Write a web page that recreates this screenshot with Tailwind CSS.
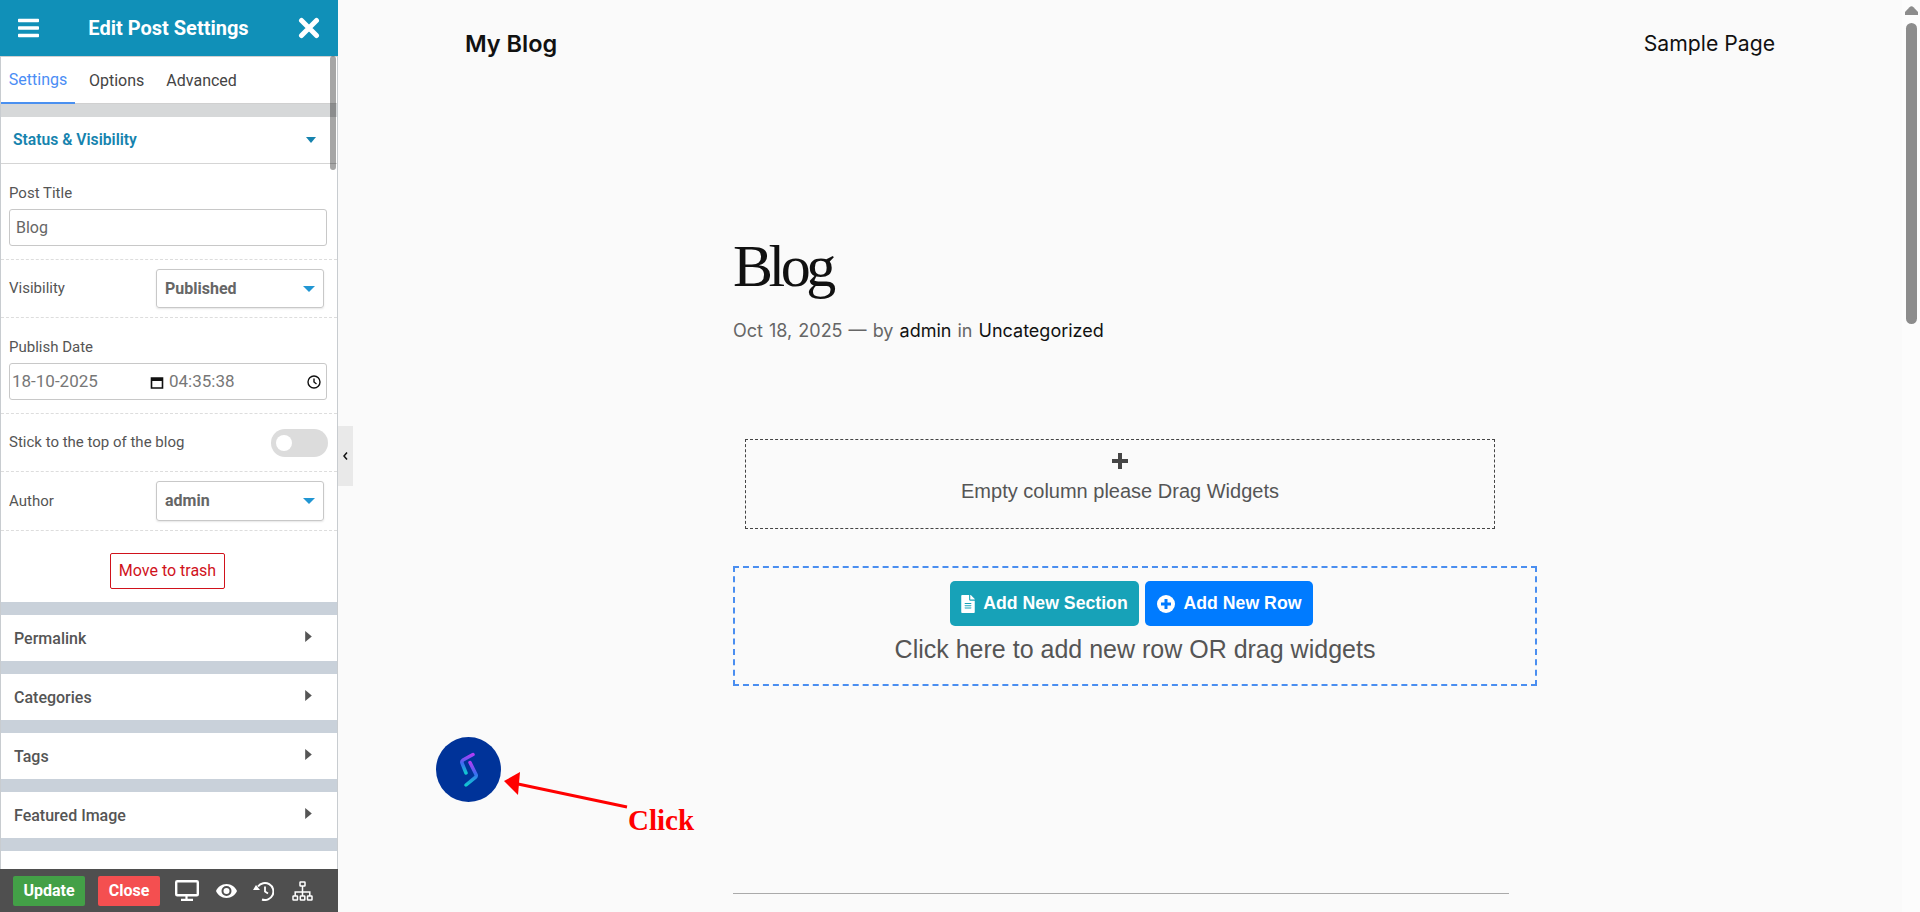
<!DOCTYPE html>
<html lang="en">
<head>
<meta charset="utf-8">
<title>Edit Post Settings</title>
<script src="https://cdn.jsdelivr.net/npm/@tailwindcss/browser@4"></script>
</head>
<body class="m-0 overflow-hidden bg-[#fafafa]">
<div class="relative flex h-[912px] w-[1920px] overflow-hidden bg-[#fafafa]">

  <!-- Sidebar -->
  <aside class="relative flex h-[912px] w-[338px] shrink-0 flex-col font-['Roboto',sans-serif] text-[#555]">
    <header class="flex h-[56px] shrink-0 items-center justify-between bg-[#1090b8] pl-[18px] pr-[18px] text-white">
      <svg class="h-[24px] w-[21px]" viewBox="0 0 448 512" fill="currentColor"><path d="M16 132h416c8.837 0 16-7.163 16-16V76c0-8.837-7.163-16-16-16H16C7.163 60 0 67.163 0 76v40c0 8.837 7.163 16 16 16zm0 160h416c8.837 0 16-7.163 16-16v-40c0-8.837-7.163-16-16-16H16c-8.837 0-16 7.163-16 16v40c0 8.837 7.163 16 16 16zm0 160h416c8.837 0 16-7.163 16-16v-40c0-8.837-7.163-16-16-16H16c-8.837 0-16 7.163-16 16v40c0 8.837 7.163 16 16 16z"/></svg>
      <span class="text-[20px] font-bold">Edit Post Settings</span>
      <svg class="h-[22px] w-[22px]" viewBox="0 0 22 22" fill="none" stroke="currentColor" stroke-width="5" stroke-linecap="round"><path d="M3.500 3.500l15 15M18.500 3.500l-15 15"/></svg>
    </header>

    <div class="relative flex min-h-0 flex-1 flex-col overflow-hidden border-x border-[#c8ccd0] bg-white">
      <nav class="flex h-[48px] shrink-0 border-t border-b border-[#d0d0d0] text-[16px] text-[#444]">
        <span class="-mb-px flex w-[74px] items-center justify-center border-b-2 border-[#4a90f0] text-[#4a8df5]">Settings</span>
        <span class="ml-[14px] flex items-center pt-[2px]">Options</span>
        <span class="ml-[22px] flex items-center pt-[2px]">Advanced</span>
      </nav>
      <div class="h-[13px] shrink-0 bg-[#d6d8d9]"></div>
      <div class="flex h-[47px] shrink-0 items-center justify-between border-b border-[#d5d5d5] pl-[12px] pr-[21px]">
        <span class="text-[15.700px] font-semibold text-[#1683ae]">Status &amp; Visibility</span>
        <svg class="h-[6px] w-[10px]" viewBox="0 0 10 6" fill="#1683ae"><path d="M0 0h10L5 6z"/></svg>
      </div>

      <div class="h-[96px] shrink-0 border-b border-dashed border-[#ddd] pl-[8px] pr-[10px] pt-[15px]">
        <div class="text-[15px] leading-[28px]">Post Title</div>
        <div class="mt-[2px] flex h-[37px] items-center rounded-[3px] border border-[#c8c8c8] px-[6px] text-[16px] text-[#666]">Blog</div>
      </div>

      <div class="flex h-[58px] shrink-0 items-center justify-between border-b border-dashed border-[#ddd] pl-[8px] pr-[13px]">
        <span class="text-[15px]">Visibility</span>
        <div class="flex h-[39px] w-[168px] items-center justify-between rounded-[3px] border border-[#c8c8c8] pl-[8px] pr-[8px] text-[16px] font-bold text-[#666] shadow-[0_1px_2px_rgba(0,0,0,0.1)]">Published
          <svg class="h-[6px] w-[12px]" viewBox="0 0 12 6" fill="#2196d3"><path d="M0 0h12L6 6z"/></svg>
        </div>
      </div>

      <div class="h-[96px] shrink-0 border-b border-dashed border-[#ddd] pl-[8px] pr-[10px] pt-[15px]">
        <div class="text-[15px] leading-[28px]">Publish Date</div>
        <div class="mt-[2px] flex h-[37px] items-center rounded-[3px] border border-[#c8c8c8] pl-[2px] pr-[5px] text-[17px] text-[#777]">
          <span class="w-[138px]">18-10-2025</span>
          <svg class="h-[14px] w-[14px]" viewBox="0 0 14 14" fill="none" stroke="#111" stroke-width="1.600"><path d="M1.500 3h11v10h-11z"/><path d="M1.500 4.500h11" stroke-width="3"/></svg>
          <span class="ml-[5px] flex-1">04:35:38</span>
          <svg class="h-[14px] w-[14px]" viewBox="0 0 14 14" fill="none" stroke="#111" stroke-width="1.400"><circle cx="7" cy="7" r="6"/><path d="M7 3.500V7l2.500 2"/></svg>
        </div>
      </div>

      <div class="flex h-[58px] shrink-0 items-center justify-between border-b border-dashed border-[#ddd] pl-[8px] pr-[9px]">
        <span class="text-[15px]">Stick to the top of the blog</span>
        <div class="flex h-[28px] w-[57px] items-center rounded-full bg-[#dcdcdc] pl-[5px]"><span class="h-[16px] w-[16px] rounded-full bg-white"></span></div>
      </div>

      <div class="flex h-[59px] shrink-0 items-center justify-between border-b border-dashed border-[#ddd] pl-[8px] pr-[13px]">
        <span class="text-[15px]">Author</span>
        <div class="flex h-[40px] w-[168px] items-center justify-between rounded-[3px] border border-[#c8c8c8] pl-[8px] pr-[8px] text-[16px] font-bold text-[#666] shadow-[0_1px_2px_rgba(0,0,0,0.1)]">admin
          <svg class="h-[6px] w-[12px]" viewBox="0 0 12 6" fill="#2196d3"><path d="M0 0h12L6 6z"/></svg>
        </div>
      </div>

      <div class="flex h-[71px] shrink-0 justify-center pr-[3px] pt-[22px]">
        <span class="flex h-[36px] w-[115px] items-center justify-center rounded-[2px] border border-[#d0121b] text-[16px] text-[#d0121b]">Move to trash</span>
      </div>

      <div class="h-[13px] shrink-0 bg-[#c9d1da]"></div>
      <div class="flex h-[46px] shrink-0 items-center justify-between pl-[13px] pr-[25px] pt-[2px] text-[16px] font-medium">Permalink<svg class="-mt-[5px] h-[11px] w-[7px]" viewBox="0 0 6 10" fill="#555"><path d="M0 0l6 5-6 5z"/></svg></div>
      <div class="h-[13px] shrink-0 bg-[#c9d1da]"></div>
      <div class="flex h-[46px] shrink-0 items-center justify-between pl-[13px] pr-[25px] pt-[2px] text-[16px] font-medium">Categories<svg class="-mt-[5px] h-[11px] w-[7px]" viewBox="0 0 6 10" fill="#555"><path d="M0 0l6 5-6 5z"/></svg></div>
      <div class="h-[13px] shrink-0 bg-[#c9d1da]"></div>
      <div class="flex h-[46px] shrink-0 items-center justify-between pl-[13px] pr-[25px] pt-[2px] text-[16px] font-medium">Tags<svg class="-mt-[5px] h-[11px] w-[7px]" viewBox="0 0 6 10" fill="#555"><path d="M0 0l6 5-6 5z"/></svg></div>
      <div class="h-[13px] shrink-0 bg-[#c9d1da]"></div>
      <div class="flex h-[46px] shrink-0 items-center justify-between pl-[13px] pr-[25px] pt-[2px] text-[16px] font-medium">Featured Image<svg class="-mt-[5px] h-[11px] w-[7px]" viewBox="0 0 6 10" fill="#555"><path d="M0 0l6 5-6 5z"/></svg></div>
      <div class="h-[13px] shrink-0 bg-[#c9d1da]"></div>

      <div class="absolute right-[1px] top-[0px] h-[114px] w-[6px] rounded-full bg-black/35"></div>
    </div>

    <footer class="flex h-[43px] shrink-0 items-center bg-[#4f4f4f] pl-[13px] text-white">
      <span class="flex h-[30px] w-[72px] items-center justify-center rounded-[2px] bg-[#43a047] text-[16px] font-bold">Update</span>
      <span class="ml-[13px] flex h-[30px] w-[62px] items-center justify-center rounded-[2px] bg-[#f44f50] text-[16px] font-bold">Close</span>
      <svg class="ml-[15px] h-[21px] w-[24px]" viewBox="0 0 24 21" fill="none" stroke="white"><rect x="1.200" y="1.200" width="21.600" height="14" rx="1" stroke-width="2.400"/><path d="M11.500 16v3M6 19.800h12" stroke-width="2.200"/></svg>
      <svg class="ml-[17px] h-[14px] w-[21px]" viewBox="0 0 21 14"><path fill="white" d="M10.500 0C5.500 0 1.800 3.200 0 7c1.800 3.800 5.500 7 10.500 7S19.200 10.800 21 7c-1.800-3.800-5.500-7-10.500-7zm0 12a5 5 0 1 1 0-10 5 5 0 0 1 0 10z"/><circle cx="10.500" cy="7" r="3" fill="white"/></svg>
      <svg class="ml-[16px] h-[20px] w-[21px]" viewBox="0 0 21 20" fill="none" stroke="white" stroke-width="2"><path d="M5 5.500A8.500 8.500 0 1 1 9 18.500"/><path d="M12 5.500v5l3 2" stroke-width="1.800"/><path d="M0 9h7L3 4z" fill="white" stroke="none"/></svg>
      <svg class="ml-[18px] h-[20px] w-[21px]" viewBox="0 0 21 20" fill="none" stroke="white" stroke-width="1.500"><rect x="8" y="1" width="5" height="4" rx=".5"/><rect x="1" y="15" width="4.500" height="4" rx=".5"/><rect x="8.300" y="15" width="4.500" height="4" rx=".5"/><rect x="15.500" y="15" width="4.500" height="4" rx=".5"/><path d="M10.500 5v10M3.200 15v-4h14.600v4"/></svg>
    </footer>

    <div class="absolute left-[338px] top-[426px] z-10 flex h-[60px] w-[15px] items-center justify-center bg-[#e9e9e9]">
      <svg class="h-[8px] w-[5px]" viewBox="0 0 5 8" fill="none" stroke="#111" stroke-width="1.500"><path d="M4 .5L1 4l3 3.500"/></svg>
    </div>
  </aside>

  <!-- Main -->
  <main class="min-w-0 flex-1 font-['Inter',sans-serif]">
    <div class="flex h-[87px] items-center justify-between pl-[127px] pr-[127px]">
      <span class="text-[23.500px] font-semibold text-[#111]">My Blog</span>
      <span class="text-[21.200px] text-[#111]">Sample Page</span>
    </div>
    <div class="ml-[395px] w-[776px]">
      <h1 class="mt-[144px] font-['Liberation_Serif',serif] text-[60px] font-normal leading-[70px] tracking-[-4.500px] text-[#111]">Blog</h1>
      <p class="mt-[16px] text-[18px] leading-[28px] text-[#666] [word-spacing:1px]">Oct 18, 2025 — by <span class="text-[#111]">admin</span> in <span class="text-[#111]">Uncategorized</span></p>

      <div class="ml-[12px] mt-[94px] flex h-[90px] w-[750px] flex-col items-center border border-dashed border-[#444] font-['Liberation_Sans',sans-serif] text-[#555]">
        <svg class="mt-[13px] h-[16px] w-[16px]" viewBox="0 0 16 16" fill="#454545"><path d="M6 0h4v6h6v4h-6v6H6v-6H0V6h6z"/></svg>
        <span class="mt-[10px] text-[20px] leading-[24px]">Empty column please Drag Widgets</span>
      </div>

      <div class="mt-[37px] flex h-[120px] w-[804px] flex-col items-center border-2 border-dashed border-[#4a8ef0] font-['Liberation_Sans',sans-serif]">
        <div class="mr-[7px] mt-[13px] flex gap-[6px] text-[17.700px] font-bold text-white">
          <span class="flex h-[45px] w-[189px] items-center justify-center gap-[8px] rounded-[5px] bg-[#17a2b8]">
            <svg class="h-[18px] w-[14px]" viewBox="0 0 384 512" fill="white"><path d="M224 136V0H24C10.700 0 0 10.700 0 24v464c0 13.300 10.700 24 24 24h336c13.300 0 24-10.700 24-24V160H248c-13.200 0-24-10.800-24-24zm64 236c0 6.600-5.400 12-12 12H108c-6.600 0-12-5.400-12-12v-8c0-6.600 5.400-12 12-12h168c6.600 0 12 5.400 12 12v8zm0-64c0 6.600-5.400 12-12 12H108c-6.600 0-12-5.400-12-12v-8c0-6.600 5.400-12 12-12h168c6.600 0 12 5.400 12 12v8zm0-72v8c0 6.600-5.400 12-12 12H108c-6.600 0-12-5.400-12-12v-8c0-6.600 5.400-12 12-12h168c6.600 0 12 5.400 12 12zm96-114.100v6.100H256V0h6.100c6.400 0 12.500 2.500 17 7l97.900 98c4.500 4.500 7 10.600 7 16.900z"/></svg>
            Add New Section
          </span>
          <span class="flex h-[45px] w-[168px] items-center justify-center gap-[9px] rounded-[5px] bg-[#007bff]">
            <svg class="h-[18px] w-[18px]" viewBox="0 0 18 18"><circle cx="9" cy="9" r="9" fill="white"/><path d="M7.500 4h3v3.500H14v3h-3.500V14h-3v-3.500H4v-3h3.500z" fill="#007bff"/></svg>
            Add New Row
          </span>
        </div>
        <span class="mt-[6px] text-[25px] leading-[34px] text-[#555]">Click here to add new row OR drag widgets</span>
      </div>

      <div class="mt-[207px] h-px bg-[#aaa]"></div>
    </div>
  </main>

  <!-- Page scrollbar -->
  <div class="relative w-[18px] shrink-0 bg-[#fcfcfc]">
    <svg class="absolute left-[3px] top-[6px] h-[9px] w-[13px]" viewBox="0 0 13 9" fill="#8c8c8c"><path d="M4.500 1.200Q6.500-.8 8.500 1.200L13 6v3H0V6z"/></svg>
    <div class="absolute left-[4px] top-[23px] h-[301px] w-[11px] rounded-full bg-[#8c8c8c]"></div>
  </div>

  <!-- Annotation -->
  <div class="absolute left-[436px] top-[737px] flex h-[65px] w-[65px] items-center justify-center rounded-full bg-[#003399]">
    <svg class="h-[36px] w-[20px]" viewBox="0 0 20 36" fill="none" stroke-width="3.500" stroke-linecap="round" stroke-linejoin="round">
      <defs>
        <linearGradient id="a" x1="0" y1="0" x2="0" y2="1"><stop offset="0" stop-color="#b03cf5"/><stop offset=".5" stop-color="#3a6df0"/><stop offset="1" stop-color="#10c8d0"/></linearGradient>
        <linearGradient id="b" x1="0" y1="0" x2="0" y2="1"><stop offset="0" stop-color="#b03cf5"/><stop offset=".5" stop-color="#3a6df0"/><stop offset="1" stop-color="#10c8d0"/></linearGradient>
      </defs>
      <path d="M14 2.500L4 8c-1 .8-1.500 1.800-1 3l4 10" stroke="url(#a)"/>
      <path d="M11 10.500l6 12c.6 1.500 0 2.500-1 3.200L7 33" stroke="url(#b)"/>
    </svg>
  </div>
  <svg class="absolute left-[500px] top-[770px] h-[50px] w-[135px]" viewBox="0 0 135 50" fill="none">
    <path d="M127 37L18 14" stroke="#ff0000" stroke-width="3"/>
    <path d="M4 11L20 2l-2 23z" fill="#ff0000"/>
  </svg>
  <span class="absolute left-[628px] top-[802px] font-['Liberation_Serif',serif] text-[29px] font-bold leading-[36px] text-[#ff0000]">Click</span>
</div>
</body>
</html>
